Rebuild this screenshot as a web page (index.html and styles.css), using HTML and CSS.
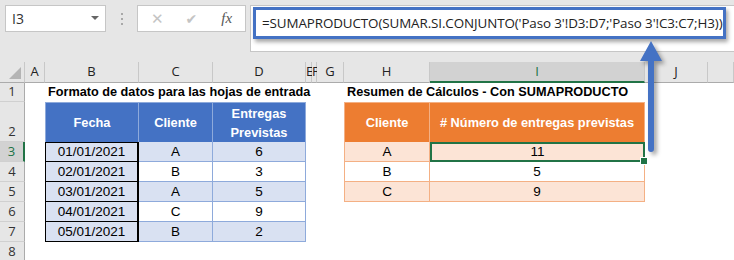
FILE: index.html
```html
<!DOCTYPE html>
<html lang="es">
<head>
    <meta charset="UTF-8">
    <title>SUMAPRODUCTO</title>
    <link rel="stylesheet" href="styles.css">
</head>
<body>
    <div class="app">
        <div class="toolbar">
            <div class="name-box">
                <span>I3</span>
                <span class="caret"></span>
            </div>
            <div class="grip"><i></i><i></i><i></i></div>
            <div class="fx-box">
                <span class="fx-cancel">&#x2715;</span>
                <span class="fx-ok">&#x2714;</span>
                <span class="fx-label">fx</span>
            </div>
            <div class="formula-bar">
                <div class="formula-highlight">=SUMAPRODUCTO(SUMAR.SI.CONJUNTO('Paso 3'!D3:D7;'Paso 3'!C3:C7;H3))</div>
            </div>
        </div>

        <div class="sheet">
            <div class="row col-heads">
                <div class="corner"><span class="corner-tri"></span></div>
                <div>A</div><div>B</div><div>C</div><div>D</div><div>E</div><div>F</div><div>G</div><div>H</div>
                <div class="active-col">I</div><div>J</div><div></div>
            </div>

            <div class="row r-20">
                <div class="rh">1</div>
                <div></div>
                <div class="title span-3">Formato de datos para las hojas de entrada</div>
                <div></div><div></div><div></div>
                <div class="title span-2">Resumen de Cálculos - Con SUMAPRODUCTO</div>
                <div></div><div></div>
            </div>

            <div class="row r-40">
                <div class="rh">2</div>
                <div></div>
                <div class="bh first">Fecha</div>
                <div class="bh">Cliente</div>
                <div class="bh">Entregas<br>Previstas</div>
                <div></div><div></div><div></div>
                <div class="oh first">Cliente</div>
                <div class="oh"># Número de entregas previstas</div>
                <div></div><div></div>
            </div>

            <div class="row r-20">
                <div class="rh active-row">3</div>
                <div></div>
                <div class="date top">01/01/2021</div>
                <div class="bc band">A</div>
                <div class="bc band">6</div>
                <div></div><div></div><div></div>
                <div class="oc band first">A</div>
                <div class="oc band selected">11<span class="fill-handle"></span></div>
                <div></div><div></div>
            </div>

            <div class="row r-20">
                <div class="rh">4</div>
                <div></div>
                <div class="date">02/01/2021</div>
                <div class="bc">B</div>
                <div class="bc">3</div>
                <div></div><div></div><div></div>
                <div class="oc first">B</div>
                <div class="oc">5</div>
                <div></div><div></div>
            </div>

            <div class="row r-20">
                <div class="rh">5</div>
                <div></div>
                <div class="date">03/01/2021</div>
                <div class="bc band">A</div>
                <div class="bc band">5</div>
                <div></div><div></div><div></div>
                <div class="oc band first">C</div>
                <div class="oc band">9</div>
                <div></div><div></div>
            </div>

            <div class="row r-20">
                <div class="rh">6</div>
                <div></div>
                <div class="date">04/01/2021</div>
                <div class="bc">C</div>
                <div class="bc">9</div>
                <div></div><div></div><div></div><div></div><div></div><div></div><div></div>
            </div>

            <div class="row r-20">
                <div class="rh">7</div>
                <div></div>
                <div class="date">05/01/2021</div>
                <div class="bc band">B</div>
                <div class="bc band">2</div>
                <div></div><div></div><div></div><div></div><div></div><div></div><div></div>
            </div>

            <div class="row r-20">
                <div class="rh">8</div>
            </div>
        </div>

        <svg class="arrow" width="40" height="124" viewBox="0 0 40 124">
            <path d="M13 5 L24 25 L16 25 L16 113 Q16 116 13 116 Q10 116 10 113 L10 25 L2 25 Z" fill="#4472c4"/>
        </svg>
    </div>
</body>
</html>
```

FILE: styles.css
```css
body {
    margin: 0;
    background: #ffffff;
    font-family: "Liberation Sans", Arial, sans-serif;
    color: #000;
}
.app {
    position: relative;
    width: 734px;
    height: 260px;
    overflow: hidden;
}
.toolbar {
    height: 62px;
    background: #e6e6e6;
    display: flex;
    align-items: flex-start;
    padding: 5px 0 0 5px;
    box-sizing: border-box;
}
.name-box {
    flex-shrink: 0;
    width: 101px;
    height: 27px;
    box-sizing: border-box;
    background: #fff;
    border: 1px solid #c6c6c6;
    display: flex;
    align-items: center;
    justify-content: space-between;
    padding: 0 6px 0 6px;
    font-family: "Open Sans", sans-serif;
    font-size: 14px;
    color: #333;
}
.caret {
    width: 0;
    height: 0;
    border-left: 4px solid transparent;
    border-right: 4px solid transparent;
    border-top: 4px solid #666;
    margin-top: -2px;
}
.grip {
    flex-shrink: 0;
    width: 31px;
    height: 27px;
    display: flex;
    flex-direction: column;
    align-items: center;
    justify-content: center;
    gap: 3px;
}
.grip i {
    width: 2px;
    height: 2px;
    background: #a8a8a8;
}
.fx-box {
    flex-shrink: 0;
    width: 109px;
    height: 27px;
    box-sizing: border-box;
    background: #fff;
    border: 1px solid #c6c6c6;
    display: flex;
    align-items: center;
    padding: 0 0 0 13px;
    gap: 22px;
}
.fx-cancel {
    color: #c4c4c4;
    font-size: 15px;
    font-family: "DejaVu Sans", sans-serif;
}
.fx-ok {
    color: #c4c4c4;
    font-size: 14px;
    font-family: "DejaVu Sans", sans-serif;
}
.fx-label {
    color: #555;
    font-family: "Liberation Serif", serif;
    font-style: italic;
    font-size: 15px;
    margin-left: 2px;
}
.formula-bar {
    margin-left: 4px;
    flex: 1;
    min-width: 0;
    height: 47px;
    box-sizing: border-box;
    background: #fff;
    border: 1px solid #c6c6c6;
    border-right: none;
    padding: 1px 8px 0 2px;
}
.formula-highlight {
    height: 32px;
    box-sizing: border-box;
    border: 3px solid #4472c4;
    box-shadow: 2px 3px 4px rgba(0, 0, 0, 0.35);
    padding: 0 0 0 6px;
    line-height: 27px;
    font-family: "Open Sans", sans-serif;
    font-size: 13.4px;
    letter-spacing: -0.1px;
    color: #222;
    white-space: nowrap;
}

/* hoja */
.row {
    display: grid;
    grid-template-columns: 25px 20px 94px 74px 93px 6px 5px 27px 86px 215px 63px 26px;
    height: 20px;
}
.row > div {
    box-sizing: border-box;
    min-width: 0;
}
.r-40 { height: 40px; }
.col-heads > div {
    background: #e6e6e6;
    border-right: 1px solid #c8c8c8;
    border-bottom: 1px solid #ababab;
    font-family: "Open Sans", sans-serif;
    font-size: 13px;
    color: #222;
    text-align: center;
    line-height: 19px;
}
.col-heads .active-col {
    background: #d2d2d2;
    border-bottom: 2px solid #217346;
    color: #217346;
}
.corner {
    position: relative;
}
.corner-tri {
    position: absolute;
    right: 3px;
    bottom: 3px;
    width: 0;
    height: 0;
    border-left: 12px solid transparent;
    border-bottom: 12px solid #b4b4b4;
}
.rh {
    background: #e6e6e6;
    border-right: 1px solid #ababab;
    border-bottom: 1px solid #d0d0d0;
    font-family: "Open Sans", sans-serif;
    font-size: 13px;
    color: #333;
    text-align: center;
    display: flex;
    align-items: flex-end;
    justify-content: center;
    line-height: 19px;
}
.rh.active-row {
    background: #d2d2d2;
    border-right: 2px solid #217346;
    color: #217346;
}
.title {
    font-weight: bold;
    font-size: 12.7px;
    white-space: nowrap;
    line-height: 20px;
    padding-left: 3px;
}
.span-3 { grid-column: span 3; }
.span-2 { grid-column: span 2; }

.bh, .oh {
    color: #fff;
    font-weight: bold;
    font-size: 12.8px;
    display: flex;
    align-items: center;
    justify-content: center;
    text-align: center;
    line-height: 19px;
}
.bh {
    background: #4472c4;
    border-top: 1px solid #8eaadb;
    border-right: 1px solid #8eaadb;
}
.bh.first { border-left: 1px solid #8eaadb; }
.oh {
    background: #ed7d31;
    border-top: 1px solid #f4b084;
    border-right: 1px solid #f4b084;
}
.oh.first { border-left: 1px solid #f4b084; }

.date, .bc, .oc {
    font-size: 13.5px;
    text-align: center;
    line-height: 19px;
}
.date {
    background: #d9e1f2;
    border: 1px solid #000;
    border-top: none;
    border-right-width: 2px;
}
.date.top { border-top: 1px solid #000; line-height: 18px; }
.bc {
    border-right: 1px solid #8eaadb;
    border-bottom: 1px solid #8eaadb;
}
.bc.band { background: #d9e1f2; }
.oc {
    border-right: 1px solid #f4b084;
    border-bottom: 1px solid #f4b084;
}
.oc.first { border-left: 1px solid #f4b084; }
.oc.band { background: #fce4d6; }
.oc.selected {
    position: relative;
    border: 2px solid #217346;
    line-height: 16px;
}
.fill-handle {
    position: absolute;
    right: -5px;
    bottom: -5px;
    width: 6px;
    height: 6px;
    background: #217346;
    border: 1px solid #fff;
}
.arrow {
    position: absolute;
    left: 638px;
    top: 36px;
    filter: drop-shadow(3px 3px 2px rgba(0, 0, 0, 0.35));
}
```
